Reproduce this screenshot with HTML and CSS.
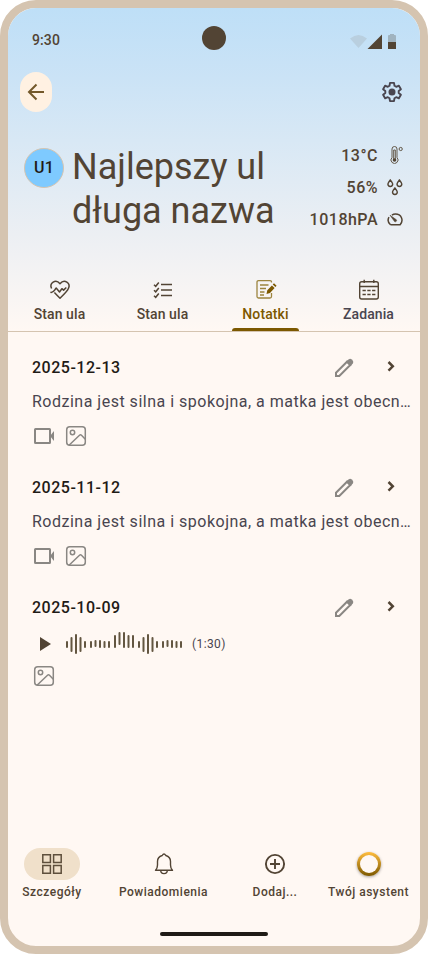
FILE: index.html
```html
<!DOCTYPE html>
<html lang="pl">
<head>
<meta charset="utf-8">
<meta name="viewport" content="width=device-width, initial-scale=1">
<title>Notatki</title>
<link rel="stylesheet" href="styles.css">
</head>
<body>
<svg class="defs" width="0" height="0" aria-hidden="true">
  <symbol id="pencil" viewBox="0 0 24 24"><path d="M4 20v-3.300L15 5.700l3.300 3.300L7.300 20z" fill="none" stroke="currentColor" stroke-width="2"/><path d="M13.800 5.500L16.800 3.300q1.500-1 3 .3l.9.900q1.200 1.500.1 3l-2.300 2.800z" fill="currentColor"/></symbol>
  <symbol id="chevron" viewBox="0 0 24 24"><path d="M9.500 6l4.300 4.300-4.300 4.300" fill="none" stroke="currentColor" stroke-width="2.500"/></symbol>
  <symbol id="video" viewBox="0 0 24 24"><rect x="3" y="5" width="15" height="14" rx=".5" fill="none" stroke="currentColor" stroke-width="2"/><path d="M18 12l4-5v10z" fill="currentColor"/></symbol>
  <symbol id="image" viewBox="0 0 24 24"><g fill="none" stroke="currentColor" stroke-width="1.500"><rect x="2.700" y="2.700" width="18.600" height="18.600" rx="3"/><circle cx="8.500" cy="8.500" r="2.200"/><path d="M5 21.200l10.500-10q1-.9 2 0l3.800 4"/></g></symbol>
</svg>
<div class="phone">
  <header class="header">
    <div class="status">
      <span class="clock">9:30</span>
      <span class="camera"></span>
      <svg class="signals" width="46" height="16" viewBox="0 0 46 16">
        <path d="M0 4.500q8.500-7 17 0L8.500 14z" fill="#b9cfdf"/>
        <path d="M32 .5V15H17.500z" fill="#524434"/>
        <path d="M38 15V2q0-1 1-1h1V0h4v1h1q1 0 1 1v13z" fill="#a0b3bf"/><path d="M38 8h8v7h-8z" fill="#524434"/>
      </svg>
    </div>
    <div class="toolbar">
      <button class="back" aria-label="Wstecz"><svg width="24" height="24" viewBox="0 0 24 24"><path d="M20 12H5M12.500 4.500L5 12l7.500 7.500" fill="none" stroke="#73582a" stroke-width="2"/></svg></button>
      <svg class="gear" width="24" height="24" viewBox="0 0 24 24"><path d="M10 2.900h4l.5 2.900 1.700 1 2.700-1.100 2 3.500-2.200 1.800v2l2.200 1.800-2 3.500-2.700-1.100-1.700 1-.5 2.900h-4l-.5-2.900-1.700-1-2.700 1.100-2-3.500L5.300 13v-2L3.100 9.200l2-3.500 2.700 1.100 1.700-1z" fill="none" stroke="#49454f" stroke-width="1.900" stroke-linejoin="round"/><circle cx="12" cy="12" r="3.500" fill="#49454f"/></svg>
    </div>
    <div class="hive">
      <span class="avatar">U1</span>
      <h1>Najlepszy ul długa nazwa</h1>
      <ul class="metrics">
        <li>13°C <svg width="16" height="18" viewBox="0 0 16 18"><g fill="none" stroke="#635849" stroke-width="1"><path d="M5 11.500V3a2.500 2.500 0 0 1 5 0v8.500a3.500 3.500 0 1 1-5 0z"/><circle cx="13.700" cy="3" r="1.600"/><path d="M6.700 13V4h1.600v9"/></g><circle cx="7.500" cy="14" r="1.800" fill="#524434"/></svg></li>
        <li>56% <svg width="16" height="18" viewBox="0 0 16 18"><g fill="none" stroke="#524434" stroke-width="1.400"><path id="drop" d="M3.300 2Q.9 5 .9 6.100a2.400 2.400 0 0 0 4.800 0Q5.700 5 3.300 2z"/><use href="#drop" x="9.100"/><use href="#drop" x="4.600" y="8"/></g></svg></li>
        <li>1018hPA <svg width="16" height="18" viewBox="0 0 16 18"><path d="M3.500 14.800h9.600C17 10.200 14.400 4.100 8.500 4.100q-2 0-3.600 1M2 7.100Q-.4 11.300 3.500 14.800" fill="none" stroke="#524434" stroke-width="1.500"/><path d="M3 5.200l6.300 4.500a1.300 1.300 0 0 1-1.700 1.900z" fill="#524434" stroke="#524434" stroke-width=".6"/></svg></li>
      </ul>
    </div>
    <nav class="tabs">
      <a class="tab"><svg width="24" height="24" viewBox="0 0 24 24"><path d="M3.600 10.500C1 5.500 7.500.3 12 5.700c4.500-5.400 11-.2 8.400 4.800-1 2.600-3.500 5-8.400 9.700-2.500-2.400-4.200-4.200-5.600-5.700M2.400 14.300c3.400.7 3.500-1.300 5.800-4.300l3.300 4 2.400-3.300 1.700 1.400 2.700-2.600" fill="none" stroke="#524434" stroke-width="1.500" stroke-linejoin="round"/></svg><span>Stan ula</span></a>
      <a class="tab"><svg width="24" height="24" viewBox="0 0 24 24"><path d="M10 6.500h11M10 12h11M10 17.500h11M3 6.800l1.700 1.500L7.800 4.500M3 12.300l1.700 1.500L7.800 10M3 17.800l1.700 1.500 3.100-3.800" fill="none" stroke="#524434" stroke-width="1.500"/></svg><span>Stan ula</span></a>
      <a class="tab active"><svg width="24" height="24" viewBox="0 0 24 24"><path d="M17.500 4.500V4q0-1.400-1.400-1.400H4.500Q3 2.600 3 4v14.500Q3 20 4.500 20H16q1.500 0 1.500-1.500V15M6 7h8.500M6 10.500h6M6 14h4.500M6 17h4" fill="none" stroke="#9c843e" stroke-width="1.300"/><path d="M12.500 16l.8-3.800 4.600-4.800 2.700 2.600-4.600 4.900zM18.700 6.500l1.300-1.300 2.600 2.600-1.200 1.300z" fill="#7c5800"/></svg><span>Notatki</span></a>
      <a class="tab plain"><svg width="24" height="24" viewBox="0 0 24 24"><rect x="2.700" y="3.700" width="18.600" height="17.300" rx="2" fill="none" stroke="#524434" stroke-width="1.400"/><path d="M7.200 1.800V5M16.800 1.800V5M3 8.500h18" fill="none" stroke="#524434" stroke-width="1.400"/><path d="M5.500 12.500h3.300m1.500 0h3.300m1.500 0h3.300M5.500 16.500h3.300m1.500 0h3.300m1.500 0h3.300" stroke="#524434" stroke-width="1.600"/></svg><span>Zadania</span></a>
    </nav>
  </header>
  <main class="notes">
    <article class="note">
      <div class="note-head"><h2>2025-12-13</h2><svg class="edit"><use href="#pencil"/></svg><svg class="open"><use href="#chevron"/></svg></div>
      <p>Rodzina jest silna i spokojna, a matka jest obecn…</p>
      <div class="media"><svg><use href="#video"/></svg><svg><use href="#image"/></svg></div>
    </article>
    <article class="note">
      <div class="note-head"><h2>2025-11-12</h2><svg class="edit"><use href="#pencil"/></svg><svg class="open"><use href="#chevron"/></svg></div>
      <p>Rodzina jest silna i spokojna, a matka jest obecn…</p>
      <div class="media"><svg><use href="#video"/></svg><svg><use href="#image"/></svg></div>
    </article>
    <article class="note">
      <div class="note-head"><h2>2025-10-09</h2><svg class="edit"><use href="#pencil"/></svg><svg class="open"><use href="#chevron"/></svg></div>
      <div class="audio">
        <svg width="24" height="24" viewBox="0 0 24 24"><path d="M8 5v14l11-7z" fill="#524434"/></svg>
        <svg class="wave" width="118" height="24" viewBox="0 0 118 24"><path d="M1 10v5M5.500 6v13M10 3v18M14.500 6v13M19 10v5M25 10v5M29.500 9v5M34 9v6M38.500 10v5M43 10v5M49 4v11M53.500 1v11M58 1v14M62.500 4v11M67 4v11M73 10v5M77.500 6v13M82 3v18M86.500 6v13M91 10v5M97 10v5M101.500 9v5M106 9v6M110.500 10v5M115 10v5" fill="none" stroke="#635641" stroke-width="2" stroke-linecap="round"/></svg>
        <span>(1:30)</span>
      </div>
      <div class="media"><svg><use href="#image"/></svg></div>
    </article>
  </main>
  <nav class="bottom">
    <a class="item selected"><i><svg width="24" height="24" viewBox="0 0 24 24"><path d="M2.800 2.800h7.600v7.600H2.800zM13.600 2.800h7.600v7.600h-7.600zM2.800 13.600h7.600v7.600H2.800zM13.600 13.600h7.600v7.600h-7.600z" fill="none" stroke="#5e4f3c" stroke-width="1.500"/></svg></i><span>Szczegóły</span></a>
    <a class="item"><i><svg width="24" height="24" viewBox="0 0 24 24"><path d="M3.500 18.200q2-1.800 2-5.200V9.500q0-4.500 4.700-6 1.800-3 3.600 0 4.700 1.500 4.700 6V13q0 3.400 2 5.200zM8.700 18.300a3.300 3.300 0 0 0 6.600 0" fill="none" stroke="#524434" stroke-width="1.400" stroke-linejoin="round"/></svg></i><span>Powiadomienia</span></a>
    <a class="item"><i><svg width="24" height="24" viewBox="0 0 24 24"><circle cx="12" cy="12" r="9.100" fill="none" stroke="#524434" stroke-width="1.900"/><path d="M12 7v10M7 12h10" stroke="#524434" stroke-width="1.900"/></svg></i><span>Dodaj...</span></a>
    <a class="item"><i><b class="ring"></b></i><span>Twój asystent</span></a>
  </nav>
  <div class="gesture"></div>
</div>
</body>
</html>
```
FILE: styles.css
```css
* { box-sizing: border-box; }
body { margin: 0; background: #fff; color: #524434; font-family: Roboto, sans-serif; }
h1, h2, p, ul { margin: 0; padding: 0; font-weight: 400; }
svg { display: block; flex: none; }
.defs { position: absolute; }
.phone { width: 428px; height: 954px; border: 8px solid #d5c4b0; border-radius: 36px; background: #fff8f3; overflow: hidden; display: flex; flex-direction: column; }

.header { height: 324px; flex: none; border-bottom: 1px solid #d5c4b0; background: linear-gradient(#bedff7 0%, #cbe3f6 22%, #d8e8f5 41%, #eceff3 70%, #fff8f3 100%); }
.status { height: 52px; padding: 12px 24px 0; display: grid; grid-template-columns: 1fr 24px 1fr; align-items: start; font-size: 14px; font-weight: 500; letter-spacing: .1px; }
.clock { line-height: 24px; padding-top: 8px; }
.camera { width: 24px; height: 24px; border-radius: 50%; background: #524434; margin-top: 6px; }
.signals { justify-self: end; margin-top: 14px; }
.toolbar { height: 64px; padding: 0 16px 0 12px; display: flex; align-items: center; justify-content: space-between; }
.back { width: 32px; height: 40px; padding: 0; border: 0; border-radius: 16px; background: #fff1e2; display: flex; align-items: center; justify-content: center; }
.hive { margin-top: 20px; height: 120px; padding: 0 16px; display: flex; align-items: flex-start; }
.avatar { width: 40px; height: 40px; margin-top: 4px; border: 1px solid #d5c4b0; border-radius: 50%; background: #7ecaff; color: #1f1b16; display: flex; align-items: center; justify-content: center; font-size: 16px; line-height: 20px; padding-bottom: 1px; font-weight: 500; letter-spacing: .15px; flex: none; }
.hive h1 { margin: 1px 0 0 8px; width: 210px; font-size: 36px; line-height: 44px; }
.metrics { list-style: none; flex: 1; margin-top: -5px; }
.metrics li { height: 32px; display: flex; align-items: center; justify-content: flex-end; gap: 9px; padding-right: 1px; font-size: 16px; font-weight: 500; letter-spacing: .5px; white-space: nowrap; }
.tabs { height: 67px; display: grid; grid-template-columns: repeat(4, 1fr); }
.tab { position: relative; display: flex; flex-direction: column; align-items: center; padding-top: 14px; font-size: 14px; line-height: 20px; font-weight: 500; letter-spacing: .1px; }
.tab span { margin-top: 2px; }
.plain { color: #49454f; }
.active { color: #7c5800; }
.active::after { content: ""; position: absolute; bottom: 0; width: 67px; height: 3px; border-radius: 3px 3px 0 0; background: #7c5800; }

.notes { padding: 24px 8px 0 24px; flex: 1; }
.note { height: 120px; }
.note-head { display: flex; align-items: center; height: 24px; }
.note h2 { flex: 1; font-size: 16px; line-height: 24px; font-weight: 500; letter-spacing: .5px; color: #1f1b16; }
.edit, .open, .media svg { width: 24px; height: 24px; }
.edit { color: #8a8783; margin-right: 23px; }
.open { margin-right: 9px; }
.note p { margin-top: 10px; font-size: 16px; line-height: 24px; letter-spacing: .5px; color: #49454f; white-space: nowrap; }
.media { display: flex; gap: 8px; margin-top: 10px; color: #8a8783; }
.audio { display: flex; align-items: center; height: 24px; margin-top: 12px; }
.wave { margin-left: 10px; }
.audio span { margin-left: 8px; font-size: 12px; letter-spacing: .4px; color: #49454f; }
.audio + .media { margin-top: 8px; }

.bottom { display: grid; grid-template-columns: 88px 135px 88px 99px; height: 84px; }
.item { display: flex; flex-direction: column; align-items: center; font-size: 12px; line-height: 16px; font-weight: 500; letter-spacing: .5px; white-space: nowrap; }
.item i { width: 56px; height: 32px; border-radius: 16px; margin-bottom: 4px; display: flex; align-items: center; justify-content: center; }
.selected i { background: #f0e0ca; }
.ring { width: 24px; height: 24px; border: 3px solid transparent; border-radius: 50%; background: linear-gradient(#fff8f3, #fff8f3) padding-box, linear-gradient(#ffbd3e, #7c5800) border-box; box-shadow: 0 1px 3px rgba(0, 0, 0, .35); }
.gesture { width: 108px; height: 4px; margin: 0 auto 10px; border-radius: 2px; background: #1f1b16; flex: none; }
```
